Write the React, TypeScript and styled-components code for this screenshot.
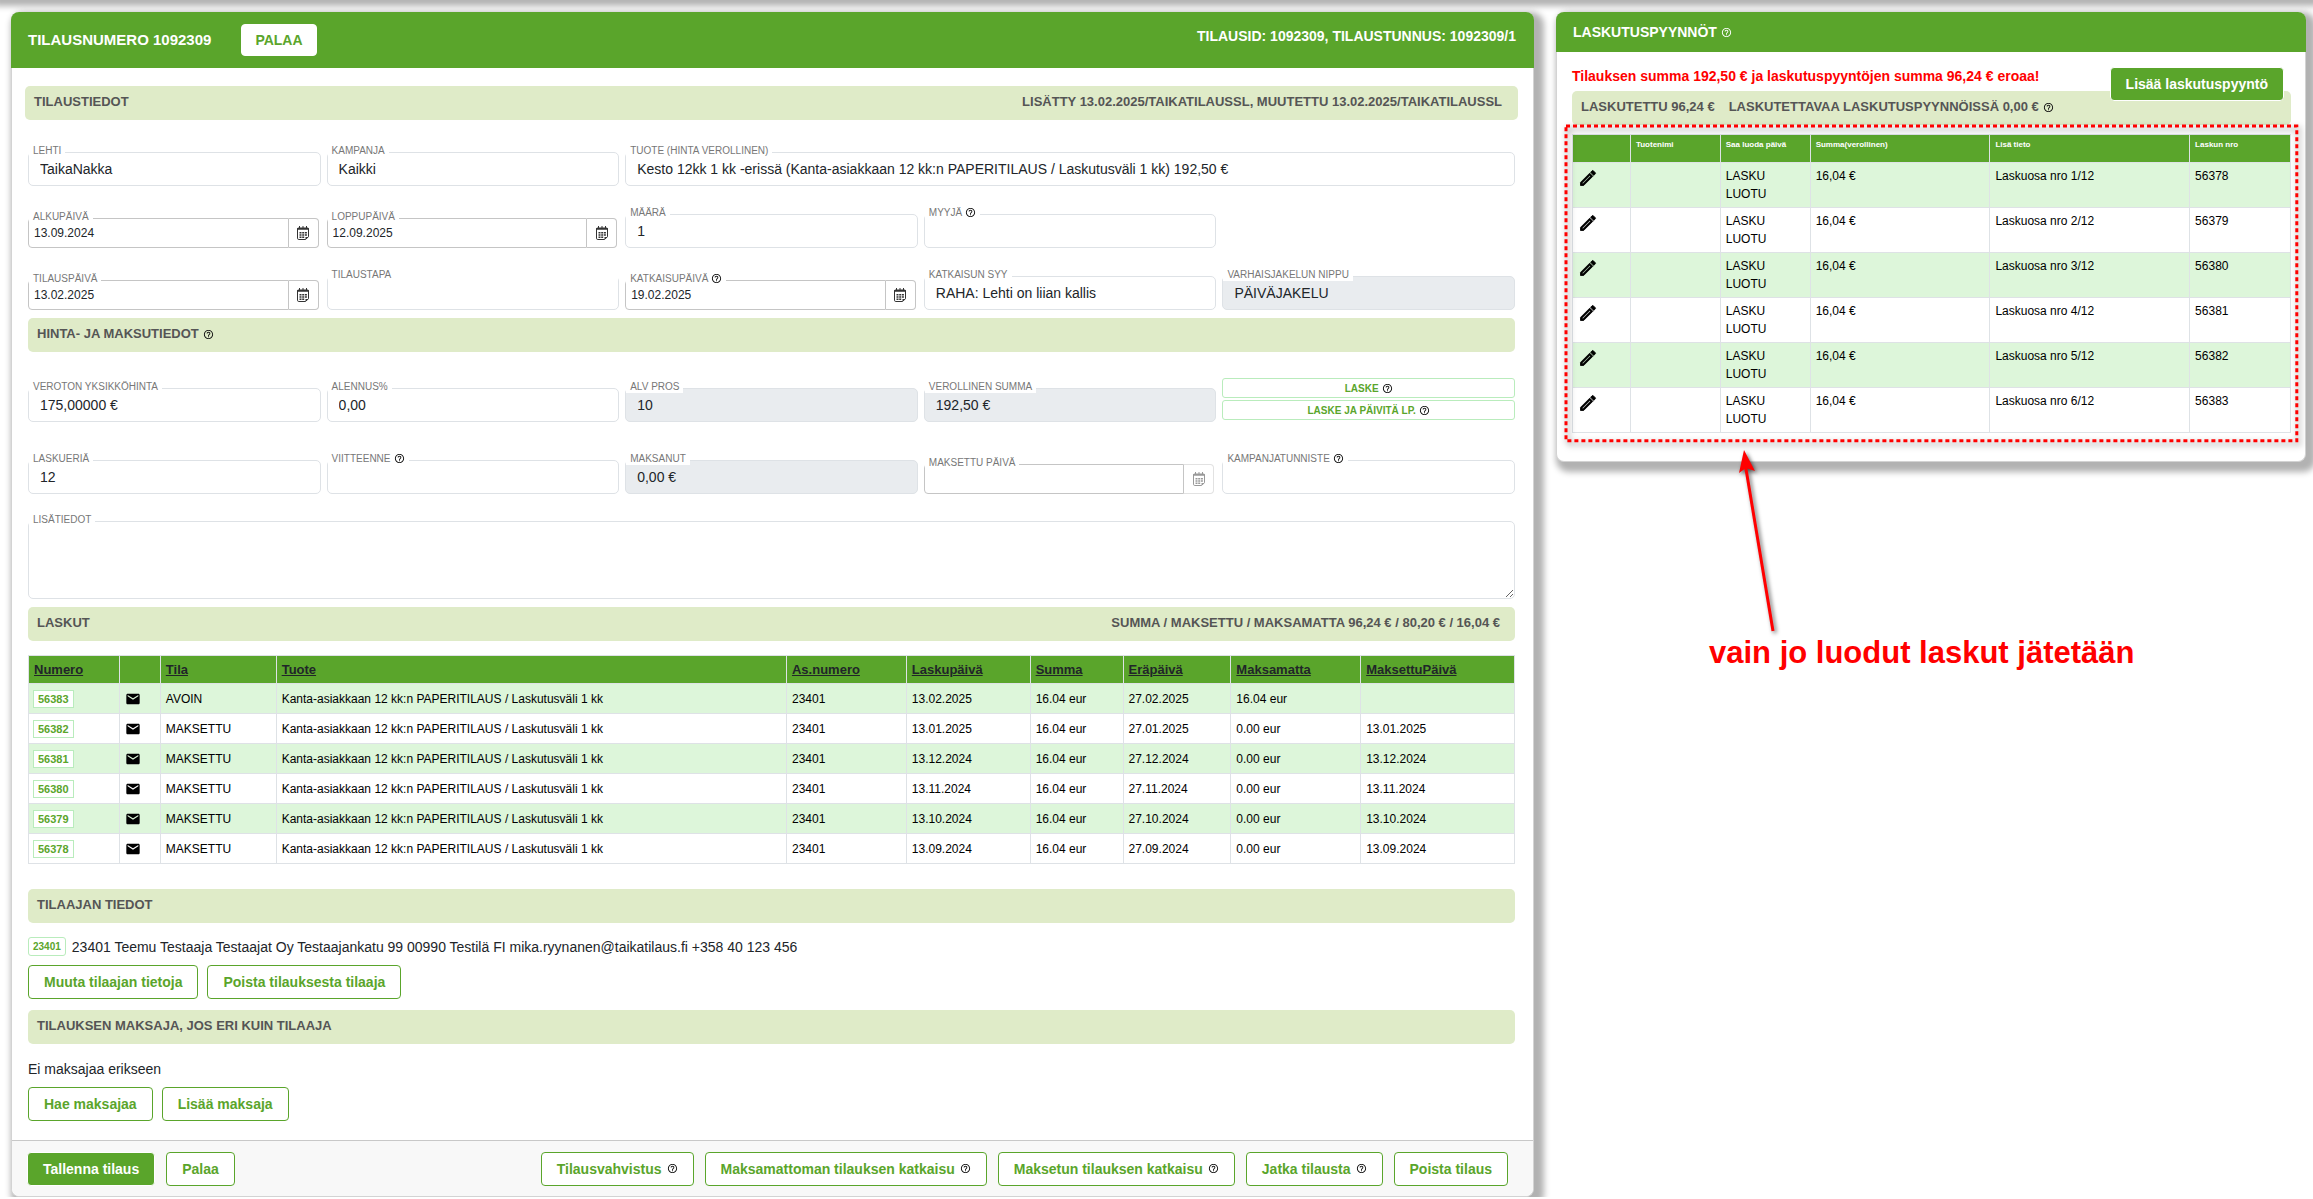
import React, { useId } from 'react';
import styled, { createGlobalStyle, css } from 'styled-components';
import { MdHelpOutline, MdOutlineEdit, MdEmail } from 'react-icons/md';

const color = {
  green: '#5aa52b',
  greenLine: '#b9ecbc',
  bar: '#dfebc8',
  stripe: '#ddf6da',
  line: '#dee2e6',
  dateLine: '#c5c5c5',
  text: '#212529',
  label: '#777777',
  barText: '#555555',
  disabled: '#e9ecef',
  red: '#ff0000',
};

const GlobalStyle = createGlobalStyle`
  *, *::before, *::after { box-sizing: border-box; }
  body {
    margin: 0;
    background: #fff;
    color: ${color.text};
    font: 14px/20px "Liberation Sans", Arial, Helvetica, sans-serif;
  }
  button, input, textarea { font-family: inherit; }
`;

/* ---------- page frame ---------- */

const TopShadow = styled.div`
  height: 0;
  box-shadow: 0 0 6px 6px #b2b2b2;
`;

const Page = styled.main`
  display: grid;
  grid-template-columns: 1523fr 750fr;
  align-items: start;
  gap: 22px;
  padding: 12px 7px 0 11px;
`;

const Card = styled.section`
  border: 1px solid #d3d3d3;
  border-top: 0;
  border-radius: 8px;
  background: #fff;
  box-shadow: 5px 5px 6px 5px #b2b2b2;
  min-width: 0;
`;

const CardHeader = styled.header<{ $tall?: boolean }>`
  display: flex;
  align-items: center;
  justify-content: space-between;
  height: ${(p) => (p.$tall ? 56 : 40)}px;
  margin: 0 -1px;
  padding: 0 18px 0 17px;
  border-radius: 8px 8px 0 0;
  background: ${color.green};
  color: #fff;
  font-weight: bold;
  text-transform: uppercase;
`;

const TitleGroup = styled.div`
  display: flex;
  align-items: center;
  gap: 30px;
`;

const Title = styled.h1`
  margin: 0;
  font-size: 15px;
  font-weight: bold;
`;

const SideTitle = styled.h2`
  margin: 0;
  font-size: 14px;
  font-weight: bold;
`;

const HeaderIds = styled.span`
  padding-bottom: 8px;
`;

/* ---------- buttons ---------- */

const Button = styled.button<{ $solid?: boolean }>`
  display: inline-flex;
  align-items: center;
  justify-content: center;
  gap: 5px;
  height: 34px;
  padding: 0 15px;
  border: 1px solid ${color.green};
  border-radius: 4px;
  background: #fff;
  color: ${color.green};
  font-size: 14px;
  font-weight: bold;
  white-space: nowrap;
  ${(p) =>
    p.$solid &&
    css`
      border-color: #fff;
      background: ${color.green};
      color: #fff;
    `}
`;

const HeaderButton = styled(Button)`
  height: 32px;
  padding: 0 13px;
  border-color: #fff;
  text-transform: uppercase;
`;

const ThinButton = styled.button`
  display: flex;
  align-items: center;
  justify-content: center;
  gap: 3px;
  width: 100%;
  height: 20px;
  padding: 0;
  border: 1px solid ${color.greenLine};
  border-radius: 3px;
  background: #fff;
  color: ${color.green};
  font-size: 10px;
  font-weight: bold;
  text-transform: uppercase;
`;

const NumberLink = styled.a<{ $small?: boolean }>`
  display: inline-block;
  padding: 0 4px;
  border: 1px solid ${color.greenLine};
  border-radius: ${(p) => (p.$small ? 3 : 0)}px;
  background: #fff;
  color: ${color.green};
  font-size: ${(p) => (p.$small ? 10 : 11)}px;
  line-height: ${(p) => (p.$small ? 17 : 16)}px;
  font-weight: bold;
  text-decoration: none;
`;

const ButtonRow = styled.div`
  display: flex;
  gap: 9px;
`;

/* ---------- section bars ---------- */

const Body = styled.div`
  padding: 18px 18px 19px 16px;
`;

const Bar = styled.h2<{ $wide?: boolean }>`
  display: flex;
  align-items: flex-start;
  justify-content: space-between;
  height: 34px;
  margin: 0 ${(p) => (p.$wide ? -3 : 0)}px;
  padding: 6px ${(p) => (p.$wide ? 16 : 15)}px 0 9px;
  border-radius: 5px;
  background: ${color.bar};
  color: ${color.barText};
  font-size: 13px;
  line-height: 20px;
  font-weight: bold;
  text-transform: uppercase;
`;

const BarText = styled.span`
  display: inline-flex;
  align-items: center;
  gap: 4px;
`;

/* ---------- fields ---------- */

const FieldGrid = styled.div<{ $top: number; $row: number }>`
  display: grid;
  grid-template-columns: repeat(5, minmax(0, 1fr));
  align-items: end;
  column-gap: 6px;
  row-gap: ${(p) => p.$row}px;
  padding-top: ${(p) => p.$top}px;
  margin-bottom: 8px;
`;

const FieldBox = styled.div<{ $span?: number }>`
  position: relative;
  grid-column: span ${(p) => p.$span ?? 1};
`;

const FieldLabel = styled.label<{ $full?: boolean }>`
  position: absolute;
  top: -8px;
  left: 1px;
  z-index: 1;
  display: flex;
  align-items: center;
  gap: 3px;
  width: ${(p) => (p.$full ? 'calc(100% - 2px)' : 'auto')};
  padding: 0 4px;
  background: #fff;
  color: ${color.label};
  font-size: 10px;
  line-height: 13px;
  text-transform: uppercase;
  white-space: nowrap;
`;

const TextInput = styled.input`
  display: block;
  width: 100%;
  height: 34px;
  padding: 0 11px;
  border: 1px solid ${color.line};
  border-radius: 5px;
  background: #fff;
  color: ${color.text};
  font-size: 14px;
  &:disabled {
    background: ${color.disabled};
    opacity: 1;
  }
`;

const TextArea = styled.textarea`
  display: block;
  width: 100%;
  height: 78px;
  padding: 8px 11px;
  border: 1px solid ${color.line};
  border-radius: 5px;
  font-size: 14px;
  resize: vertical;
`;

const DateGroup = styled.div`
  display: flex;
  height: 30px;
  margin-right: 2px;
`;

const DateInput = styled.input`
  flex: 1;
  min-width: 0;
  padding: 0 5px;
  border: 1px solid ${color.dateLine};
  border-radius: 4px 0 0 4px;
  background: #fff;
  color: ${color.text};
  font-size: 12px;
`;

const DateButton = styled.button`
  display: flex;
  align-items: center;
  justify-content: center;
  width: 30px;
  padding: 0;
  border: 1px solid ${color.dateLine};
  border-left: 0;
  border-radius: 0 4px 4px 0;
  background: #fff;
  color: #333;
  &:disabled {
    border-color: #e2e2e2;
    color: #999;
  }
`;

const StackedButtons = styled.div`
  display: grid;
  gap: 2px;
  padding-bottom: 2px;
`;

const Help = styled(MdHelpOutline)<{ $light?: boolean }>`
  flex: none;
  width: 11px;
  height: 11px;
  color: ${(p) => (p.$light ? '#fff' : '#111')};
`;

const CalendarIcon = () => (
  <svg width="14" height="15" viewBox="0 0 14 15" fill="none" aria-hidden="true">
    <path d="M1.5 3v9.200q0 1.300 1.300 1.300h6.700l3-2.800V3" stroke="currentColor" />
    <path d="M1 3.800V2.200L2.500 1.500h9l1.500.7v1.600z" fill="currentColor" />
    <path d="M3.500 0v2M7 0v2M10.500 0v2" stroke="currentColor" />
    <path d="M3.500 6h2v1.500h-2zM6.200 6h2v1.500h-2zM8.900 6h2v1.500h-2zM3.500 8.300h2v1.500h-2zM6.200 8.300h2v1.500h-2zM8.900 8.300h2v1.500h-2zM3.500 10.600h2v1.500h-2zM6.200 10.600h2v1.500h-2z" fill="currentColor" />
    <path d="M9.500 13.500v-2.500h3z" fill="currentColor" />
  </svg>
);

type FieldProps = {
  label: string;
  value?: string;
  help?: boolean;
  span?: number;
  disabled?: boolean;
  fullLabel?: boolean;
};

const Field = ({ label, value = '', help, span, disabled, fullLabel }: FieldProps) => {
  const id = useId();
  return (
    <FieldBox $span={span}>
      <FieldLabel htmlFor={id} $full={fullLabel}>
        {label}
        {help && <Help />}
      </FieldLabel>
      <TextInput id={id} defaultValue={value} disabled={disabled} />
    </FieldBox>
  );
};

const DateField = ({ label, value = '', help, disabled }: FieldProps) => {
  const id = useId();
  return (
    <FieldBox>
      <FieldLabel htmlFor={id}>
        {label}
        {help && <Help />}
      </FieldLabel>
      <DateGroup>
        <DateInput id={id} defaultValue={value} />
        <DateButton type="button" aria-label="Valitse päivä" disabled={disabled}>
          <CalendarIcon />
        </DateButton>
      </DateGroup>
    </FieldBox>
  );
};

/* ---------- tables ---------- */

const Table = styled.table`
  width: 100%;
  table-layout: fixed;
  border-collapse: collapse;
  color: #000;
  font-size: 12px;
  line-height: 18px;
  th, td {
    padding: 0 5px;
    border: 1px solid ${color.line};
    text-align: left;
  }
  th { background: ${color.green}; }
  tbody tr:nth-child(odd) { background: ${color.stripe}; }
`;

const InvoiceTable = styled(Table)`
  margin: 14px 0 25px;
  th {
    height: 28px;
    font-size: 13px;
  }
  td { height: 30px; }
  td:first-child { padding: 0 4px; }
  svg { display: block; }
`;

const SortLink = styled.a`
  color: ${color.text};
  text-decoration: underline;
`;

const RequestTable = styled(Table)`
  th {
    height: 28px;
    padding-top: 1px;
    color: #fff;
    font-size: 8px;
    vertical-align: top;
  }
  td {
    height: 45px;
    padding: 4px 5px;
    vertical-align: top;
  }
`;

const Col = styled.col<{ $share: number }>`
  width: ${(p) => p.$share}%;
`;

const Columns = ({ widths }: { widths: number[] }) => {
  const total = widths.reduce((a, b) => a + b, 0);
  return (
    <colgroup>
      {widths.map((w, i) => (
        <Col key={i} $share={(w / total) * 100} />
      ))}
    </colgroup>
  );
};

const IconButton = styled.button`
  display: block;
  padding: 1px 0;
  border: 0;
  background: none;
  color: #000;
  svg { display: block; }
  path:last-child { stroke: currentColor; stroke-width: 1px; }
`;

/* ---------- subscriber and footer ---------- */

const PersonLine = styled.p`
  display: flex;
  align-items: center;
  gap: 6px;
  height: 19px;
  margin: 14px 0 9px;
`;

const PayerLine = styled.p`
  margin: 15px 0 8px;
`;

const Gap = styled.div`
  height: 11px;
`;

const Footer = styled.footer`
  display: flex;
  align-items: center;
  justify-content: space-between;
  height: 56px;
  padding: 0 25px 0 15px;
  border-top: 1px solid #c8c8c8;
  border-radius: 0 0 8px 8px;
  background: #f8f8f8;
`;

const FooterGroup = styled.div`
  display: flex;
  gap: 11px;
`;

/* ---------- billing requests ---------- */

const RequestBody = styled.div`
  padding: 15px 14px 28px 15px;
`;

const WarningRow = styled.div`
  display: flex;
  justify-content: space-between;
  height: 24px;
  padding-right: 7px;
`;

const Warning = styled.strong`
  line-height: 18px;
  color: ${color.red};
`;

const BarGroup = styled.span`
  display: inline-flex;
  align-items: center;
  gap: 14px;
`;

const Annotated = styled.div`
  position: relative;
  margin-top: 9px;
`;

const DottedFrame = styled.svg`
  position: absolute;
  top: -9px;
  left: -7px;
  width: calc(100% + 14px);
  height: calc(100% + 18px);
  overflow: visible;
  pointer-events: none;
  filter: drop-shadow(2px 3px 3px rgba(0, 0, 0, 0.5));
`;

const Note = styled.figure`
  position: absolute;
  top: 100%;
  left: 137px;
  margin: 17px 0 0;
  color: ${color.red};
  font-size: 31px;
  line-height: 36px;
  font-weight: bold;
  white-space: nowrap;
  svg {
    display: block;
    margin-left: 28px;
    overflow: visible;
    filter: drop-shadow(2px 2px 2px rgba(0, 0, 0, 0.6));
  }
`;

const product = 'Kanta-asiakkaan 12 kk:n PAPERITILAUS / Laskutusväli 1 kk';

const invoices = [
  ['56383', 'AVOIN', '13.02.2025', '27.02.2025', '16.04 eur', ''],
  ['56382', 'MAKSETTU', '13.01.2025', '27.01.2025', '0.00 eur', '13.01.2025'],
  ['56381', 'MAKSETTU', '13.12.2024', '27.12.2024', '0.00 eur', '13.12.2024'],
  ['56380', 'MAKSETTU', '13.11.2024', '27.11.2024', '0.00 eur', '13.11.2024'],
  ['56379', 'MAKSETTU', '13.10.2024', '27.10.2024', '0.00 eur', '13.10.2024'],
  ['56378', 'MAKSETTU', '13.09.2024', '27.09.2024', '0.00 eur', '13.09.2024'],
];

const invoiceHeads = ['Numero', '', 'Tila', 'Tuote', 'As.numero', 'Laskupäivä', 'Summa', 'Eräpäivä', 'Maksamatta', 'MaksettuPäivä'];
const requestHeads = ['', 'Tuotenimi', 'Saa luoda päivä', 'Summa(verollinen)', 'Lisä tieto', 'Laskun nro'];
const requests = ['56378', '56379', '56380', '56381', '56382', '56383'];

const OrderCard = () => {
  const notesId = useId();
  return (
    <Card>
      <CardHeader $tall>
        <TitleGroup>
          <Title>Tilausnumero 1092309</Title>
          <HeaderButton type="button">Palaa</HeaderButton>
        </TitleGroup>
        <HeaderIds>TilausID: 1092309, Tilaustunnus: 1092309/1</HeaderIds>
      </CardHeader>

      <Body>
        <Bar $wide>
          <span>Tilaustiedot</span>
          <span>Lisätty 13.02.2025/taikatilaussl, muutettu 13.02.2025/taikatilaussl</span>
        </Bar>
        <FieldGrid $top={32} $row={28}>
          <Field label="Lehti" value="TaikaNakka" />
          <Field label="Kampanja" value="Kaikki" />
          <Field
            label="Tuote (hinta verollinen)"
            value="Kesto 12kk 1 kk -erissä (Kanta-asiakkaan 12 kk:n PAPERITILAUS / Laskutusväli 1 kk) 192,50 €"
            span={3}
          />
          <DateField label="Alkupäivä" value="13.09.2024" />
          <DateField label="Loppupäivä" value="12.09.2025" />
          <Field label="Määrä" value="1" />
          <Field label="Myyjä" help />
          <span />
          <DateField label="Tilauspäivä" value="13.02.2025" />
          <Field label="Tilaustapa" fullLabel />
          <DateField label="Katkaisupäivä" value="19.02.2025" help />
          <Field label="Katkaisun syy" value="RAHA: Lehti on liian kallis" />
          <Field label="Varhaisjakelun nippu" value="PÄIVÄJAKELU" disabled />
        </FieldGrid>

        <Bar>
          <BarText>
            Hinta- ja maksutiedot <Help />
          </BarText>
        </Bar>
        <FieldGrid $top={36} $row={38}>
          <Field label="Veroton yksikköhinta" value="175,00000 €" />
          <Field label="Alennus%" value="0,00" />
          <Field label="ALV pros" value="10" disabled />
          <Field label="Verollinen summa" value="192,50 €" disabled />
          <StackedButtonsSlot />
          <Field label="Laskueriä" value="12" />
          <Field label="Viitteenne" help />
          <Field label="Maksanut" value="0,00 €" disabled />
          <DateField label="Maksettu päivä" disabled />
          <Field label="Kampanjatunniste" help />
        </FieldGrid>
        <FieldGrid $top={19} $row={0}>
          <FieldBox $span={5}>
            <FieldLabel htmlFor={notesId}>Lisätiedot</FieldLabel>
            <TextArea id={notesId} />
          </FieldBox>
        </FieldGrid>

        <Bar>
          <span>Laskut</span>
          <span>Summa / Maksettu / Maksamatta 96,24 € / 80,20 € / 16,04 €</span>
        </Bar>
        <InvoiceTable>
          <Columns widths={[91, 41, 116, 511, 120, 124, 93, 108, 130, 154]} />
          <thead>
            <tr>
              {invoiceHeads.map((h, i) => (
                <th key={i}>{h && <SortLink href="#">{h}</SortLink>}</th>
              ))}
            </tr>
          </thead>
          <tbody>
            {invoices.map(([no, state, date, due, open, paid]) => (
              <tr key={no}>
                <td>
                  <NumberLink href="#">{no}</NumberLink>
                </td>
                <td>
                  <MdEmail size={16} />
                </td>
                <td>{state}</td>
                <td>{product}</td>
                <td>23401</td>
                <td>{date}</td>
                <td>16.04 eur</td>
                <td>{due}</td>
                <td>{open}</td>
                <td>{paid}</td>
              </tr>
            ))}
          </tbody>
        </InvoiceTable>

        <Bar>Tilaajan tiedot</Bar>
        <PersonLine>
          <NumberLink href="#" $small>
            23401
          </NumberLink>
          23401 Teemu Testaaja Testaajat Oy Testaajankatu 99 00990 Testilä FI mika.ryynanen@taikatilaus.fi +358 40 123 456
        </PersonLine>
        <ButtonRow>
          <Button type="button">Muuta tilaajan tietoja</Button>
          <Button type="button">Poista tilauksesta tilaaja</Button>
        </ButtonRow>
        <Gap />
        <Bar>Tilauksen maksaja, jos eri kuin tilaaja</Bar>
        <PayerLine>Ei maksajaa erikseen</PayerLine>
        <ButtonRow>
          <Button type="button">Hae maksajaa</Button>
          <Button type="button">Lisää maksaja</Button>
        </ButtonRow>
      </Body>

      <Footer>
        <FooterGroup>
          <Button type="button" $solid>
            Tallenna tilaus
          </Button>
          <Button type="button">Palaa</Button>
        </FooterGroup>
        <FooterGroup>
          <Button type="button">
            Tilausvahvistus <Help />
          </Button>
          <Button type="button">
            Maksamattoman tilauksen katkaisu <Help />
          </Button>
          <Button type="button">
            Maksetun tilauksen katkaisu <Help />
          </Button>
          <Button type="button">
            Jatka tilausta <Help />
          </Button>
          <Button type="button">Poista tilaus</Button>
        </FooterGroup>
      </Footer>
    </Card>
  );
};

/* The pair is taller than a field; the negative margin lets it rise above the row. */
const RaisedButtons = styled(StackedButtons)`
  margin-top: -10px;
`;

const StackedButtonsSlot = () => (
  <RaisedButtons>
    <ThinButton type="button">
      Laske <Help />
    </ThinButton>
    <ThinButton type="button">
      Laske ja päivitä LP. <Help />
    </ThinButton>
  </RaisedButtons>
);

const RequestCard = () => (
  <Card>
    <CardHeader>
      <BarText>
        <SideTitle>Laskutuspyynnöt</SideTitle>
        <Help $light />
      </BarText>
    </CardHeader>
    <RequestBody>
      <WarningRow>
        <Warning>Tilauksen summa 192,50 € ja laskutuspyyntöjen summa 96,24 € eroaa!</Warning>
        <Button type="button" $solid>
          Lisää laskutuspyyntö
        </Button>
      </WarningRow>
      <Bar as="div">
        <BarGroup>
          <span>Laskutettu 96,24 €</span>
          <BarText>
            Laskutettavaa laskutuspyynnöissä 0,00 € <Help />
          </BarText>
        </BarGroup>
      </Bar>
      <Annotated>
        <RequestTable>
          <Columns widths={[58, 90, 90, 180, 200, 101]} />
          <thead>
            <tr>
              {requestHeads.map((h, i) => (
                <th key={i}>{h}</th>
              ))}
            </tr>
          </thead>
          <tbody>
            {requests.map((no, i) => (
              <tr key={no}>
                <td>
                  <IconButton type="button" aria-label="Muokkaa">
                    <MdOutlineEdit size={20} />
                  </IconButton>
                </td>
                <td />
                <td>
                  LASKU
                  <br />
                  LUOTU
                </td>
                <td>16,04 €</td>
                <td>Laskuosa nro {i + 1}/12</td>
                <td>{no}</td>
              </tr>
            ))}
          </tbody>
        </RequestTable>
        <DottedFrame aria-hidden="true">
          <rect x="1" y="1" width="99.7%" height="99.3%" fill="none" stroke={color.red} strokeWidth="3" strokeDasharray="4 3" />
        </DottedFrame>
        <Note>
          <svg width="40" height="185" viewBox="0 0 40 185" aria-hidden="true">
            <path d="M8.500 16 36 181" stroke={color.red} strokeWidth="3" />
            <path d="M7 0 18 21 9 18 2 23z" fill={color.red} />
          </svg>
          <figcaption>vain jo luodut laskut jätetään</figcaption>
        </Note>
      </Annotated>
    </RequestBody>
  </Card>
);

export default function App() {
  return (
    <>
      <GlobalStyle />
      <TopShadow />
      <Page>
        <OrderCard />
        <RequestCard />
      </Page>
    </>
  );
}
